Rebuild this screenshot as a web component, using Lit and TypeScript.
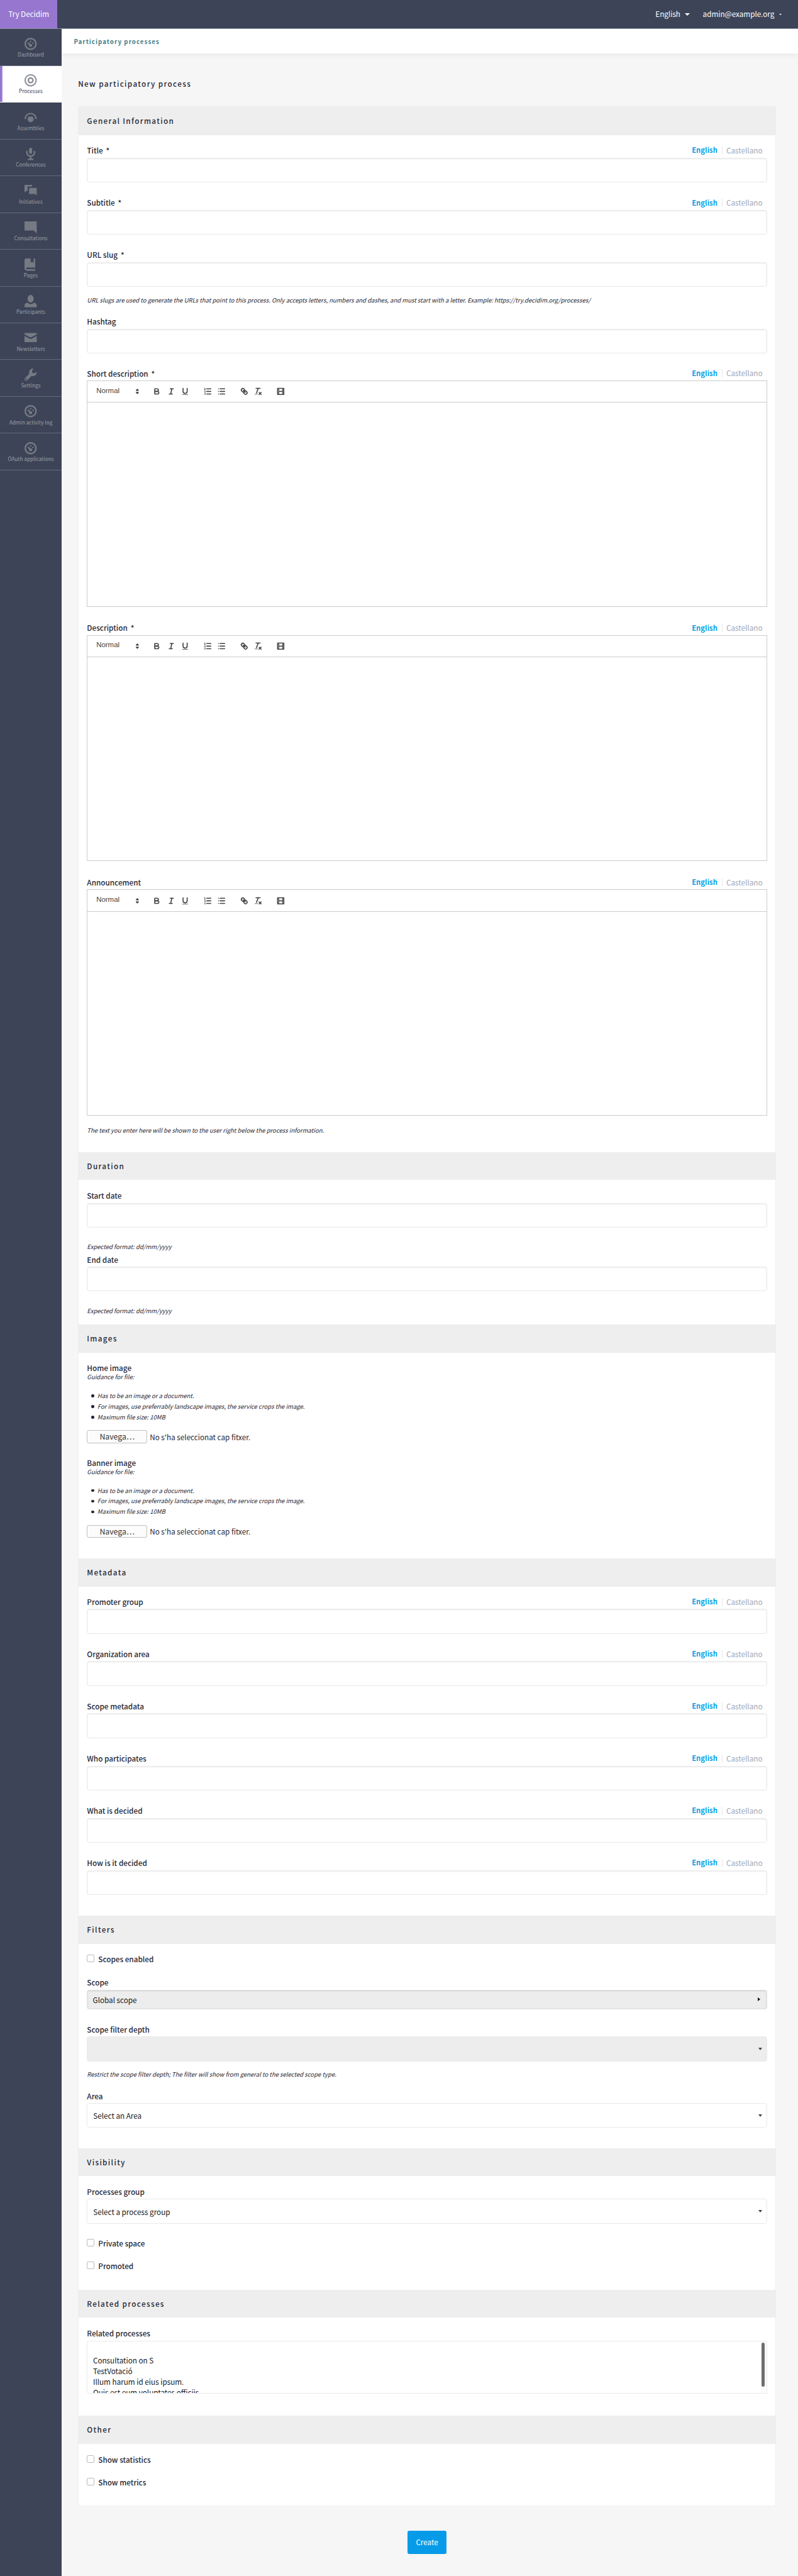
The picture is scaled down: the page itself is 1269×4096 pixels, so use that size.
import { LitElement, html, svg, css, nothing, type TemplateResult } from "lit";
import { customElement } from "lit/decorators.js";

const DIAL =
  "M4 0c-2.2 0-4 1.8-4 4s1.8 4 4 4 4-1.8 4-4-1.8-4-4-4zm0 1c1.66 0 3 1.34 3 3s-1.34 3-3 3-3-1.34-3-3 1.34-3 3-3zm0 1c-.28 0-.5.22-.5.5s.22.5.5.5.5-.22.5-.5-.22-.5-.5-.5zm-1.66 1a.5.5 0 0 0-.19.84l.91.91c-.02.08-.06.16-.06.25 0 .55.45 1 1 1s1-.45 1-1-.45-1-1-1c-.09 0-.17.04-.25.06l-.91-.91a.5.5 0 0 0-.44-.16.5.5 0 0 0-.06 0zm3.16 0c-.28 0-.5.22-.5.5s.22.5.5.5.5-.22.5-.5-.22-.5-.5-.5z";

const NAV: { label: string; icon: TemplateResult; active?: boolean }[] = [
  { label: "Dashboard", icon: svg`<path d=${DIAL} />` },
  {
    label: "Processes",
    active: true,
    icon: svg`<path d="M4 0c-2.2 0-4 1.8-4 4s1.8 4 4 4 4-1.8 4-4-1.8-4-4-4zm0 .85c1.74 0 3.15 1.41 3.15 3.15s-1.41 3.15-3.15 3.15-3.15-1.41-3.15-3.15 1.41-3.15 3.15-3.15zm0 1.15c-1.1 0-2 .9-2 2s.9 2 2 2 2-.9 2-2-.9-2-2-2zm0 1c.56 0 1 .44 1 1s-.44 1-1 1-1-.44-1-1 .44-1 1-1z" />`,
  },
  {
    label: "Assemblies",
    icon: svg`<path d="M0 5C0 2.750 1.800 1 4 1s4 1.750 4 4h-1c0-1.700-1.350-3.100-3-3.100S1 3.300 1 5z" /><path d="M3.350 3.200l.65.62.65-.62a2 2 0 1 1-1.300 0z" />`,
  },
  {
    label: "Conferences",
    icon: svg`<path transform="translate(1 0)" d="M2.910-.03a1 1 0 0 0-.13.03 1 1 0 0 0-.78 1v2a1 1 0 1 0 2 0v-2a1 1 0 0 0-1.090-1.030zm-2.560 2.030a.5.5 0 0 0-.34.5v.5c0 1.480 1.090 2.690 2.500 2.940v1.060h-.5c-.55 0-1 .45-1 1h4.010c0-.55-.45-1-1-1h-.5v-1.060c1.410-.24 2.500-1.460 2.500-2.940v-.5a.5.5 0 1 0-1 0v.5c0 1.110-.89 2-2 2-1.110 0-2-.89-2-2v-.5a.5.5 0 0 0-.59-.5.5.5 0 0 0-.06 0z" />`,
  },
  { label: "Initiatives", icon: svg`<path d="M0 0v5l1-1h1v-3h3v-1h-5zm3 2v4h4l1 1v-5h-5z" />` },
  { label: "Consultations", icon: svg`<path d="M0 0v6h6l2 2v-8h-8z" />` },
  {
    label: "Pages",
    icon: svg`<path d="M1 0c-.07 0-.13.01-.19.03-.39.08-.7.39-.78.78-.03.06-.03.12-.03.19v5.500c0 .83.67 1.500 1.500 1.500h5.500v-1h-5.500c-.28 0-.5-.22-.5-.5s.22-.5.5-.5h5.500v-5.500c0-.28-.22-.5-.5-.5h-.5v3l-1-1-1 1v-3h-3z" />`,
  },
  {
    label: "Participants",
    icon: svg`<path d="M4 0c-1.100 0-2 1.120-2 2.500s.9 2.500 2 2.500 2-1.120 2-2.500-.9-2.500-2-2.500zm-2.090 5c-1.060.05-1.910.92-1.910 2v1h8v-1c0-1.080-.84-1.950-1.910-2-.54.61-1.280 1-2.090 1-.81 0-1.550-.39-2.090-1z" />`,
  },
  {
    label: "Newsletters",
    icon: svg`<path transform="translate(0 1)" d="M0 0v1l4 2 4-2v-1h-8zm0 2v4h8v-4l-4 2-4-2z" />`,
  },
  {
    label: "Settings",
    icon: svg`<path d="M5.500 0c-1.380 0-2.500 1.120-2.500 2.500 0 .32.08.62.19.91l-2.910 2.880c-.39.39-.39 1.050 0 1.440.2.2.46.28.72.28.26 0 .52-.09.72-.28l2.880-2.910c.28.11.58.19.91.19 1.380 0 2.500-1.120 2.500-2.500 0-.16 0-.32-.03-.47l-.97.97h-2v-2l.97-.97c-.15-.03-.31-.03-.47-.03zm-4.500 6.500c.28 0 .5.22.5.5s-.22.5-.5.5-.5-.22-.5-.5.22-.5.5-.5z" />`,
  },
  { label: "Admin activity log", icon: svg`<path d=${DIAL} />` },
  { label: "OAuth applications", icon: svg`<path d=${DIAL} />` },
];

const TOOLS: TemplateResult[][] = [
  [
    svg`<path class="s" d="M5 4H9.500A2.500 2.500 0 0 1 12 6.500A2.500 2.500 0 0 1 9.500 9H5z" /><path class="s" d="M5 9h5.500A2.500 2.500 0 0 1 13 11.500A2.500 2.500 0 0 1 10.500 14H5z" />`,
    svg`<line class="s" x1="7" x2="13" y1="4" y2="4" /><line class="s" x1="5" x2="11" y1="14" y2="14" /><line class="s" x1="8" x2="10" y1="14" y2="4" />`,
    svg`<path class="s" d="M5 3V9a4.012 4.012 0 0 0 4 4a4.012 4.012 0 0 0 4-4V3" /><rect class="f" height="1" rx=".5" width="12" x="3" y="15" />`,
  ],
  [
    svg`<line class="s" x1="7" x2="15" y1="4" y2="4" /><line class="s" x1="7" x2="15" y1="9" y2="9" /><line class="s" x1="7" x2="15" y1="14" y2="14" /><line class="t" x1="2.5" x2="4.5" y1="5.500" y2="5.500" /><path class="f" d="M3.500 6A.5.5 0 0 1 3 5.500V3.085l-.276.138A.5.5 0 0 1 2.053 3c-.124-.247-.023-.324.224-.447l1-.5A.5.5 0 0 1 4 2.500v3A.5.5 0 0 1 3.500 6Z" /><path class="t" d="M4.500 10.500h-2c0-.234 1.850-1.076 1.850-2.234A.959.959 0 0 0 2.500 8.156" /><path class="t" d="M2.500 14.846a.959.959 0 0 0 1.850-.109A.7.7 0 0 0 3.750 14a.688.688 0 0 0 .6-.736.959.959 0 0 0-1.850-.109" />`,
    svg`<line class="s" x1="6" x2="15" y1="4" y2="4" /><line class="s" x1="6" x2="15" y1="9" y2="9" /><line class="s" x1="6" x2="15" y1="14" y2="14" /><line class="s" x1="3" x2="3" y1="4" y2="4" /><line class="s" x1="3" x2="3" y1="9" y2="9" /><line class="s" x1="3" x2="3" y1="14" y2="14" />`,
  ],
  [
    svg`<line class="s" x1="7" x2="11" y1="7" y2="11" /><path class="s" d="M8.900 4.577a3.476 3.476 0 0 1 .36 4.679A3.476 3.476 0 0 1 4.577 8.900C3.185 7.500 2.035 6.400 4.217 4.217S7.500 3.185 8.900 4.577Z" /><path class="s" d="M13.423 9.100a3.476 3.476 0 0 0-4.679-.36 3.476 3.476 0 0 0 .36 4.679c1.392 1.392 2.500 2.542 4.679.36S14.815 10.500 13.423 9.100Z" />`,
    svg`<line class="s" x1="5" x2="13" y1="3" y2="3" /><line class="s" x1="6" x2="9.350" y1="12" y2="3" /><line class="s" x1="11" x2="15" y1="11" y2="15" /><line class="s" x1="15" x2="11" y1="11" y2="15" /><rect class="f" height="1" rx=".5" width="7" x="2" y="14" />`,
  ],
  [
    svg`<rect class="s" height="12" width="12" x="3" y="3" /><rect class="f" height="12" width="1" x="5" y="3" /><rect class="f" height="12" width="1" x="12" y="3" /><rect class="f" height="2" width="8" x="5" y="8" />${[5, 7, 10, 12].map(
      (y) => svg`<rect class="f" height="1" width="3" x="3" y=${y} /><rect class="f" height="1" width="3" x="12" y=${y} />`,
    )}`,
  ],
];

@customElement("app-root")
export class AppRoot extends LitElement {
  static styles = css`
    :host {
      display: block;
      font-family: "Noto Sans CJK SC", "Source Sans Pro", sans-serif;
      color: #1f2735;
    }
    * {
      box-sizing: border-box;
    }
    .page {
      zoom: 0.748;
      width: 100%;
      height: 5475.9px;
      display: flex;
      flex-direction: column;
      background: #f6f6f6;
      overflow: hidden;
      font-size: 15.65px;
      white-space: nowrap;
    }
    .topbar {
      flex: none;
      height: 62px;
      background: #3d4457;
      border-bottom: 1px solid #8d94a5;
      display: flex;
      justify-content: space-between;
      color: #fff;
      line-height: 60px;
    }
    .brand {
      width: 122px;
      background: #9676cf;
      text-align: center;
    }
    .account {
      display: flex;
      align-items: center;
      padding-right: 35px;
    }
    .tri {
      width: 0;
      height: 0;
      border: 6px solid transparent;
      border-top-color: #fff;
      border-bottom: 0;
      margin: 0 27px 0 10px;
    }
    .tri.small {
      border-width: 4px 4px 0;
      margin: 2px 0 0 10px;
    }
    .columns {
      flex: 1;
      display: flex;
      min-height: 0;
    }
    .side {
      flex: none;
      width: 131px;
      background: #3d4457;
    }
    .nav {
      height: 78.15px;
      border-bottom: 1px solid #626a7c;
      padding-top: 18px;
      display: flex;
      flex-direction: column;
      align-items: center;
      color: #9c9fa6;
      font-size: 11px;
      line-height: 18px;
    }
    .nav svg {
      width: 26px;
      height: 26px;
      fill: #757a83;
      margin-bottom: 1px;
      overflow: visible;
    }
    .nav.active {
      background: #fff;
      border-bottom-color: #fff;
      box-shadow: inset 5px 0 #9676cf;
      color: #3d4457;
    }
    .nav.active svg {
      fill: #8b8f98;
    }
    .content {
      flex: 1;
      min-width: 0;
    }
    .crumbs {
      height: 52px;
      padding-left: 26px;
      background: #fff;
      box-shadow: 0 4px 12px rgba(0, 0, 0, 0.06);
      font-size: 13px;
      font-weight: 700;
      letter-spacing: 1.42px;
      line-height: 56px;
      color: #3e7f90;
    }
    .main {
      padding: 51px 47px 0 35px;
    }
    h1,
    h2 {
      margin: 0;
      font-size: 15.7px;
      font-weight: 500;
      letter-spacing: 1.8px;
    }
    h1 {
      height: 61px;
      line-height: 28px;
    }
    .card {
      background: #fff;
      border-radius: 5px;
      box-shadow: inset 0 0 0 1px #eaeaea;
      overflow: hidden;
    }
    h2 {
      height: 59.6px;
      line-height: 60px;
      padding-left: 19px;
      background: #eee;
    }
    .body {
      padding: 18px 19px 0;
    }
    .row {
      display: flex;
      justify-content: space-between;
      height: 30px;
      line-height: 29px;
      font-size: 15.7px;
      font-weight: 500;
    }
    .row.tight {
      margin-bottom: -6px;
    }
    .star {
      margin-left: 3px;
    }
    .langs {
      display: flex;
      align-items: center;
      padding-right: 9.5px;
    }
    .langs b {
      font-size: 15.1px;
      font-weight: 700;
      color: #0a9fe6;
      padding-right: 9px;
    }
    .langs i {
      font-style: normal;
      font-weight: 400;
      color: #a0a7b8;
      padding-left: 8.5px;
      border-left: 1px solid #e6e6e6;
      line-height: 17px;
    }
    .input {
      height: 53px;
      border: 1px solid #eaeaea;
      border-radius: 5px;
      box-shadow: inset 0 1px 3px rgba(10, 10, 10, 0.1);
    }
    .g28 {
      margin-bottom: 28px;
    }
    .help {
      height: 21px;
      line-height: 21px;
      font-size: 12.75px;
      font-style: italic;
    }
    .h18 {
      margin: 18px 0 20px;
    }
    .h21 {
      margin: 21px 0 35px;
    }
    .h31 {
      margin: 31.6px 0 1px;
    }
    .editor {
      height: 481px;
      border: 1px solid #ccc;
    }
    .g30 {
      margin-bottom: 30px;
    }
    .toolbar {
      height: 46px;
      border-bottom: 1px solid #ccc;
      display: flex;
      align-items: center;
      padding-left: 8px;
      color: #444;
    }
    .picker {
      width: 107px;
      margin-right: 16.4px;
      padding-left: 10.5px;
      display: flex;
      align-items: center;
      justify-content: space-between;
      font: 500 15.3px/40px "Liberation Sans", Arial, sans-serif;
    }
    .picker span {
      padding-bottom: 3px;
    }
    .group {
      display: flex;
      margin-right: 16.4px;
    }
    .toolbar svg {
      width: 19.7px;
      height: 19.7px;
      fill: none;
    }
    .group svg {
      margin: 0 5.45px;
    }
    .s {
      stroke: #444;
      stroke-width: 2;
      stroke-linecap: round;
      stroke-linejoin: round;
    }
    .t {
      stroke: #444;
      stroke-width: 1;
      stroke-linecap: round;
    }
    .f {
      fill: #444;
    }
    ul {
      margin: 17.5px 0 17px;
      padding: 0 0 0 22px;
      list-style: none;
    }
    li {
      display: flex;
      align-items: center;
      height: 22.6px;
      line-height: 22.6px;
      font-size: 12.75px;
      font-style: italic;
      margin-left: -13px;
    }
    .dot {
      width: 6px;
      height: 6px;
      border-radius: 50%;
      background: #1f2735;
      margin-right: 7px;
    }
    .file {
      display: flex;
      align-items: center;
      gap: 5.5px;
      height: 27px;
    }
    .browse {
      width: 128px;
      height: 27px;
      line-height: 26px;
      text-align: center;
      font-size: 16.5px;
      color: #333;
      background: #fcfcfc;
      border: 1px solid #bfbfbf;
      border-radius: 4px;
    }
    .g27 {
      margin-bottom: 27px;
    }
    .check {
      display: flex;
      align-items: center;
      gap: 8px;
      height: 17px;
      font-size: 15.7px;
      font-weight: 500;
    }
    .check span {
      padding-top: 4px;
      line-height: 20px;
    }
    .box {
      width: 16px;
      height: 16px;
      border: 1px solid #b9b9b9;
      border-radius: 3px;
      background: #fff;
    }
    .g31 {
      margin-bottom: 31px;
    }
    .select {
      height: 52.5px;
      border: 1px solid #eaeaea;
      border-radius: 5px;
      padding: 0 9px 0 12px;
      display: flex;
      align-items: center;
      justify-content: space-between;
      color: #15171c;
    }
    .caret {
      border: 4.5px solid transparent;
      border-top: 6.5px solid #3d4457;
      border-bottom: 0;
    }
    .grey {
      background: #ededed;
    }
    .scope {
      height: 42px;
      padding: 0 13px 0 11px;
      border-color: #e2e2e2;
      box-shadow: inset 0 1px 3px rgba(10, 10, 10, 0.15);
    }
    .play {
      border: 4.5px solid transparent;
      border-left: 5.5px solid #111;
      border-right: 0;
    }
    .list {
      height: 112px;
      border: 1px solid #eaeaea;
      border-radius: 5px 0 0 5px;
      display: flex;
      justify-content: space-between;
      overflow: hidden;
      color: #15171c;
    }
    .options {
      padding: 28px 0 0 11.5px;
      line-height: 23px;
    }
    .track {
      width: 12px;
      padding: 3px 3px 0 2px;
      background: #fcfcfc;
    }
    .thumb {
      width: 6px;
      height: 94px;
      border-radius: 3px;
      background: #6e6e6e;
    }
    .general h2 {
      height: 61px;
      line-height: 61px;
    }
    .duration .input,
    .hashtag .input {
      height: 52px;
    }
    .duration .body {
      padding-top: 19px;
      padding-bottom: 17px;
    }
    .images .body,
    .metadata .body,
    .other .body {
      padding-bottom: 44px;
    }
    .images .body {
      padding-top: 18.4px;
    }
    .filters .body {
      padding-top: 22.5px;
      padding-bottom: 43px;
    }
    .visibility .body {
      padding-top: 18.5px;
      padding-bottom: 43px;
    }
    .visibility .select {
      margin-bottom: 32.5px;
    }
    .related .body {
      padding-top: 18.8px;
      padding-bottom: 48px;
    }
    .other .body {
      padding-top: 23.5px;
    }
    .actions {
      display: flex;
      justify-content: center;
      padding-top: 52px;
    }
    .create {
      width: 84px;
      height: 49px;
      line-height: 49px;
      text-align: center;
      color: #fff;
      background: #069be8;
      border-radius: 4px;
    }
  `;

  private label(text: string, langs = false, tight = false, required = false) {
    return html`<div class="row ${tight ? "tight" : ""}">
      <span>${text}${required ? html` <span class="star">*</span>` : nothing}</span>
      ${langs ? html`<span class="langs"><b>English</b><i>Castellano</i></span>` : nothing}
    </div>`;
  }

  private text(label: string, langs = true, last = false, required = false) {
    return html`${this.label(label, langs, false, required)}
      <div class="input ${last ? "" : "g28"}"></div>`;
  }

  private editor(label: string, required = true) {
    return html`${this.label(label, true, false, required)}
      <div class="editor ${required ? "g30" : ""}">
        <div class="toolbar">
          <div class="picker">
            <span>Normal</span>
            <svg viewBox="0 0 18 18">
              <polygon class="s f" points="7 11 9 13 11 11 7 11" />
              <polygon class="s f" points="7 7 9 5 11 7 7 7" />
            </svg>
          </div>
          ${TOOLS.map(
            (g) => html`<div class="group">${g.map((t) => html`<svg viewBox="0 0 18 18">${t}</svg>`)}</div>`,
          )}
        </div>
      </div>`;
  }

  private file(label: string, last = false) {
    return html`${this.label(label, false, true)}
      <div class="help">Guidance for file:</div>
      <ul>
        ${[
          "Has to be an image or a document.",
          "For images, use preferrably landscape images, the service crops the image.",
          "Maximum file size: 10MB",
        ].map((t) => html`<li><span class="dot"></span>${t}</li>`)}
      </ul>
      <div class="file ${last ? "" : "g27"}">
        <div class="browse">Navega…</div>
        <span>No s'ha seleccionat cap fitxer.</span>
      </div>`;
  }

  private check(label: string, gap = "") {
    return html`<div class="check ${gap}"><div class="box"></div><span>${label}</span></div>`;
  }

  private section(name: string, title: string, body: TemplateResult) {
    return html`<section class=${name}>
      <h2>${title}</h2>
      <div class="body">${body}</div>
    </section>`;
  }

  render() {
    return html`<div class="page">
      <header class="topbar">
        <div class="brand">Try Decidim</div>
        <div class="account">
          <span>English</span><span class="tri"></span>
          <span>admin@example.org</span><span class="tri small"></span>
        </div>
      </header>
      <div class="columns">
        <nav class="side">
          ${NAV.map(
            (n) => html`<div class="nav ${n.active ? "active" : ""}">
              <svg viewBox="0 0 8 8">${n.icon}</svg><span>${n.label}</span>
            </div>`,
          )}
        </nav>
        <div class="content">
          <div class="crumbs">Participatory processes</div>
          <div class="main">
            <h1>New participatory process</h1>
            <div class="card">
              ${this.section(
                "general",
                "General Information",
                html`${this.text("Title", true, false, true)} ${this.text("Subtitle", true, false, true)}
                  ${this.text("URL slug", false, true, true)}
                  <div class="help h18">
                    URL slugs are used to generate the URLs that point to this process. Only accepts letters, numbers
                    and dashes, and must start with a letter. Example: https://try.decidim.org/processes/
                  </div>
                  <div class="hashtag">${this.text("Hashtag", false)}</div>
                  ${this.editor("Short description")} ${this.editor("Description")}
                  ${this.editor("Announcement", false)}
                  <div class="help h21">
                    The text you enter here will be shown to the user right below the process information.
                  </div>`,
              )}
              ${this.section(
                "duration",
                "Duration",
                html`${this.text("Start date", false, true)}
                  <div class="help h31">Expected format: dd/mm/yyyy</div>
                  ${this.text("End date", false, true)}
                  <div class="help h31">Expected format: dd/mm/yyyy</div>`,
              )}
              ${this.section("images", "Images", html`${this.file("Home image")} ${this.file("Banner image", true)}`)}
              ${this.section(
                "metadata",
                "Metadata",
                html`${[
                  "Promoter group",
                  "Organization area",
                  "Scope metadata",
                  "Who participates",
                  "What is decided",
                  "How is it decided",
                ].map((l, i) => this.text(l, true, i === 5))}`,
              )}
              ${this.section(
                "filters",
                "Filters",
                html`${this.check("Scopes enabled", "g28")} ${this.label("Scope")}
                  <div class="select grey scope g28"><span>Global scope</span><span class="play"></span></div>
                  ${this.label("Scope filter depth")}
                  <div class="select grey"><span></span><span class="caret"></span></div>
                  <div class="help h18">
                    Restrict the scope filter depth; The filter will show from general to the selected scope type.
                  </div>
                  ${this.label("Area")}
                  <div class="select"><span>Select an Area</span><span class="caret"></span></div>`,
              )}
              ${this.section(
                "visibility",
                "Visibility",
                html`${this.label("Processes group")}
                  <div class="select"><span>Select a process group</span><span class="caret"></span></div>
                  ${this.check("Private space", "g31")} ${this.check("Promoted")}`,
              )}
              ${this.section(
                "related",
                "Related processes",
                html`${this.label("Related processes")}
                  <div class="list">
                    <div class="options">
                      <div>Consultation on S</div>
                      <div>TestVotació</div>
                      <div>Illum harum id eius ipsum.</div>
                      <div>Quis est eum voluptates officiis</div>
                    </div>
                    <div class="track"><div class="thumb"></div></div>
                  </div>`,
              )}
              ${this.section("other", "Other", html`${this.check("Show statistics", "g31")} ${this.check("Show metrics")}`)}
            </div>
            <div class="actions"><div class="create">Create</div></div>
          </div>
        </div>
      </div>
    </div>`;
  }
}
